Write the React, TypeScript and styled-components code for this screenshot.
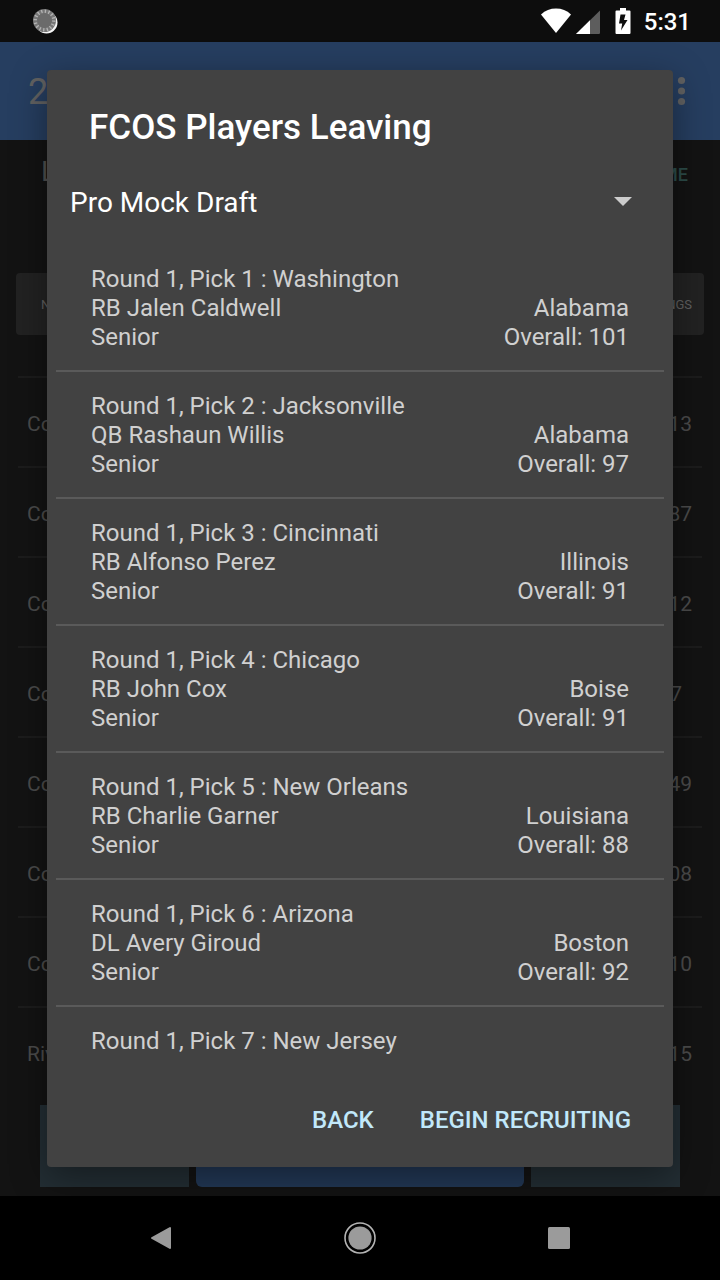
import React from "react";
import styled, { createGlobalStyle } from "styled-components";

const GlobalStyle = createGlobalStyle`
  *, *::before, *::after { box-sizing: border-box; }
  body { margin: 0; background: #000; font-family: Roboto, "Liberation Sans", sans-serif; }
  button, select { font: inherit; color: inherit; border: 0; background: none; padding: 0; margin: 0; }
  svg { display: block; }
`;

const Screen = styled.div`
  display: flex;
  flex-direction: column;
  min-height: 100vh;
`;

const StatusBar = styled.header`
  display: flex;
  align-items: center;
  height: 42px;
  padding: 0 29px 0 32px;
  background: #0d0d0d;
`;

const StatusIcons = styled.div`
  display: flex;
  align-items: center;
  margin-left: auto;
`;

const Clock = styled.time`
  margin-left: 13px;
  padding-top: 2px;
  font-size: 24px;
  line-height: 28px;
  font-weight: 500;
  color: #fff;
`;

const Stage = styled.div`
  position: relative;
  flex: 1;
  display: flex;
  flex-direction: column;
  background: #131313;
`;

const AppBar = styled.div`
  display: flex;
  align-items: center;
  justify-content: space-between;
  height: 98px;
  padding: 0 28px;
  background: #263e60;
  color: #626262;
  font-size: 36px;
  line-height: 44px;
`;

const AppTitle = styled.span`
  padding-top: 2px;
`;

const TeamLine = styled.div`
  display: flex;
  justify-content: space-between;
  height: 133px;
  padding: 15px 32px 0 41px;
  line-height: 34px;
`;

const TeamName = styled.span`
  font-size: 28px;
  color: #4f4f4f;
`;

const HomeLink = styled.span`
  font-size: 18px;
  line-height: 40px;
  font-weight: 500;
  color: #2c4c49;
`;

const TabCard = styled.div`
  display: flex;
  align-items: center;
  justify-content: space-between;
  height: 62px;
  margin: 0 16px 41px;
  padding: 0 12px 0 25px;
  border-radius: 4px;
  background: #222;
  color: #606060;
  font-size: 13px;
`;

const ScheduleRow = styled.div`
  display: flex;
  align-items: center;
  justify-content: space-between;
  height: 90px;
  margin: 0 18px;
  padding: 4px 10px 0 9px;
  border-top: 2px solid #1c1c1c;
  color: #4b4b4b;
  font-size: 21px;
`;

const Score = styled.span<{ $single?: boolean }>`
  padding-right: ${(p) => (p.$single ? 10 : 0)}px;
`;

const BottomTiles = styled.div`
  display: grid;
  grid-template-columns: 149fr 328fr 149fr;
  gap: 7px;
  height: 82px;
  margin: 9px 40px;
`;

const Tile = styled.div<{ $primary?: boolean }>`
  border-radius: ${(p) => (p.$primary ? 6 : 0)}px;
  background: ${(p) => (p.$primary ? "#223856" : "#232e34")};
`;

const Overlay = styled.div`
  position: absolute;
  inset: 0;
  display: flex;
  padding: 28px 47px 29px;
`;

const Dialog = styled.section`
  flex: 1;
  display: flex;
  flex-direction: column;
  min-width: 0;
  border-radius: 4px;
  background: #424242;
  box-shadow: 0 10px 36px rgba(0, 0, 0, 0.4);
`;

const DialogTitle = styled.h1`
  margin: 0;
  padding: 37px 42px 0;
  font-size: 35px;
  line-height: 42px;
  font-weight: 500;
  color: #fff;
`;

const Picker = styled.div`
  position: relative;
  margin: 33px 38px 21px 23px;
`;

const PickerSelect = styled.select`
  appearance: none;
  display: block;
  width: 100%;
  height: 42px;
  font-size: 28px;
  line-height: 42px;
  color: #fff;
`;

const PickerArrow = styled.svg`
  position: absolute;
  right: 3px;
  top: 15px;
  pointer-events: none;
`;

const PickList = styled.ul`
  flex: 1;
  list-style: none;
  margin: 0 9px;
  padding: 0;
  overflow: hidden;
`;

const PickItem = styled.li`
  height: 127px;
  padding: 20px 35px 0;
  border-bottom: 2px solid #5a5a5a;
  color: #d0d0d0;
  font-size: 24px;
  line-height: 29px;

  &:last-child {
    height: auto;
    border-bottom: 0;
  }
`;

const PickLine = styled.div`
  display: flex;
  justify-content: space-between;
`;

const DialogActions = styled.div`
  display: flex;
  justify-content: flex-end;
  gap: 18px;
  padding: 0 28px 15px;
`;

const ActionButton = styled.button`
  height: 64px;
  padding: 0 14px;
  font-size: 24px;
  font-weight: 500;
  color: #c1e8fa;
`;

const NavBar = styled.nav`
  display: grid;
  grid-template-columns: repeat(3, 1fr);
  height: 84px;
  padding: 0 61px;
  background: #000;
`;

const NavButton = styled.button`
  display: flex;
  align-items: center;
  justify-content: center;
`;

const schedule = [
  ["Co", "13"],
  ["Co", "87"],
  ["Co", "12"],
  ["Co", "7"],
  ["Co", "49"],
  ["Co", "08"],
  ["Co", "10"],
  ["Riv", "15"],
];

const picks = [
  { team: "Washington", player: "RB Jalen Caldwell", school: "Alabama", overall: 101 },
  { team: "Jacksonville", player: "QB Rashaun Willis", school: "Alabama", overall: 97 },
  { team: "Cincinnati", player: "RB Alfonso Perez", school: "Illinois", overall: 91 },
  { team: "Chicago", player: "RB John Cox", school: "Boise", overall: 91 },
  { team: "New Orleans", player: "RB Charlie Garner", school: "Louisiana", overall: 88 },
  { team: "Arizona", player: "DL Avery Giroud", school: "Boston", overall: 92 },
  { team: "New Jersey" },
];

const SyncIcon = () => (
  <svg width="27" height="27" viewBox="0 0 27 27" aria-hidden="true">
    <circle cx="14.500" cy="14.500" r="11" fill="#f4f4f4" />
    <circle cx="12.500" cy="12.500" r="11.500" fill="#777" />
    <circle cx="12.500" cy="12.500" r="9.200" fill="none" stroke="#b4b4b4" strokeWidth="3.600" strokeDasharray="1.300 2.313" />
    <circle cx="12.500" cy="12.500" r="7.400" fill="#6b6b6b" />
  </svg>
);

const WifiIcon = () => (
  <svg width="30" height="26" viewBox="0 0 30 26" aria-hidden="true">
    <path d="M0 6.500C4.200 2.600 9.300.600 15 .600S25.800 2.600 30 6.500L15 25Z" fill="#fff" />
  </svg>
);

const SignalIcon = () => (
  <svg width="24" height="26" viewBox="0 0 24 26" aria-hidden="true">
    <path d="M24 2.500V24.500Q24 26 23 26H0Z" fill="#5d5d5d" />
    <path d="M14 12.300V26H0Z" fill="#fff" />
  </svg>
);

const BatteryIcon = () => (
  <svg width="16" height="26" viewBox="0 0 16 26" aria-hidden="true">
    <path d="M5 0H11V2.500H14.500Q15.500 2.500 15.500 3.500V25Q15.500 26 14.500 26H1.500Q.5 26 .5 25V3.500Q.5 2.500 1.500 2.500H5Z" fill="#fff" />
    <path d="M5.500 6.500H10.500L9 12H12.500L6 22.500L7.200 15.500H4Z" fill="#0d0d0d" />
  </svg>
);

const IconGap = styled.span<{ $w: number }>`
  width: ${(p) => p.$w}px;
`;

const MoreIcon = () => (
  <svg width="21" height="30" viewBox="0 0 21 30" aria-hidden="true">
    <g fill="#626262">
      <circle cx="10.500" cy="4.500" r="3.600" />
      <circle cx="10.500" cy="15" r="3.600" />
      <circle cx="10.500" cy="25.500" r="3.600" />
    </g>
  </svg>
);

export default function App() {
  return (
    <Screen>
      <GlobalStyle />
      <StatusBar>
        <SyncIcon />
        <StatusIcons>
          <WifiIcon />
          <IconGap $w={5} />
          <SignalIcon />
          <IconGap $w={15} />
          <BatteryIcon />
          <Clock>5:31</Clock>
        </StatusIcons>
      </StatusBar>

      <Stage>
        <AppBar>
          <AppTitle>2</AppTitle>
          <MoreIcon />
        </AppBar>
        <TeamLine>
          <TeamName>L</TeamName>
          <HomeLink>ME</HomeLink>
        </TeamLine>
        <TabCard>
          <span>N</span>
          <span>NGS</span>
        </TabCard>
        {schedule.map(([name, score], i) => (
          <ScheduleRow key={i}>
            <span>{name}</span>
            <Score $single={score.length === 1}>{score}</Score>
          </ScheduleRow>
        ))}
        <BottomTiles>
          <Tile />
          <Tile $primary />
          <Tile />
        </BottomTiles>

        <Overlay>
          <Dialog role="dialog" aria-labelledby="dialog-title">
            <DialogTitle id="dialog-title">FCOS Players Leaving</DialogTitle>
            <Picker>
              <PickerSelect aria-labelledby="dialog-title" defaultValue="draft">
                <option value="draft">Pro Mock Draft</option>
              </PickerSelect>
              <PickerArrow width="18" height="9" viewBox="0 0 18 9" aria-hidden="true">
                <path d="M0 0H18L9 9Z" fill="#ccc" />
              </PickerArrow>
            </Picker>
            <PickList>
              {picks.map((p, i) => (
                <PickItem key={p.team}>
                  <PickLine>{`Round 1, Pick ${i + 1} : ${p.team}`}</PickLine>
                  {p.player && (
                    <>
                      <PickLine>
                        <span>{p.player}</span>
                        <span>{p.school}</span>
                      </PickLine>
                      <PickLine>
                        <span>Senior</span>
                        <span>{`Overall: ${p.overall}`}</span>
                      </PickLine>
                    </>
                  )}
                </PickItem>
              ))}
            </PickList>
            <DialogActions>
              <ActionButton type="button">BACK</ActionButton>
              <ActionButton type="button">BEGIN RECRUITING</ActionButton>
            </DialogActions>
          </Dialog>
        </Overlay>
      </Stage>

      <NavBar>
        <NavButton type="button" aria-label="Back">
          <svg width="22" height="24" viewBox="0 0 22 24" aria-hidden="true">
            <path d="M20 2V22L2 12Z" fill="#9b9b9b" stroke="#9b9b9b" strokeWidth="2" strokeLinejoin="round" />
          </svg>
        </NavButton>
        <NavButton type="button" aria-label="Home">
          <svg width="32" height="32" viewBox="0 0 32 32" aria-hidden="true">
            <circle cx="16" cy="16" r="15" fill="none" stroke="#b4b4b4" strokeWidth="1.600" />
            <circle cx="16" cy="16" r="11.600" fill="#9b9b9b" />
          </svg>
        </NavButton>
        <NavButton type="button" aria-label="Recent apps">
          <svg width="22" height="22" viewBox="0 0 22 22" aria-hidden="true">
            <rect width="22" height="22" rx="1.500" fill="#9b9b9b" />
          </svg>
        </NavButton>
      </NavBar>
    </Screen>
  );
}
